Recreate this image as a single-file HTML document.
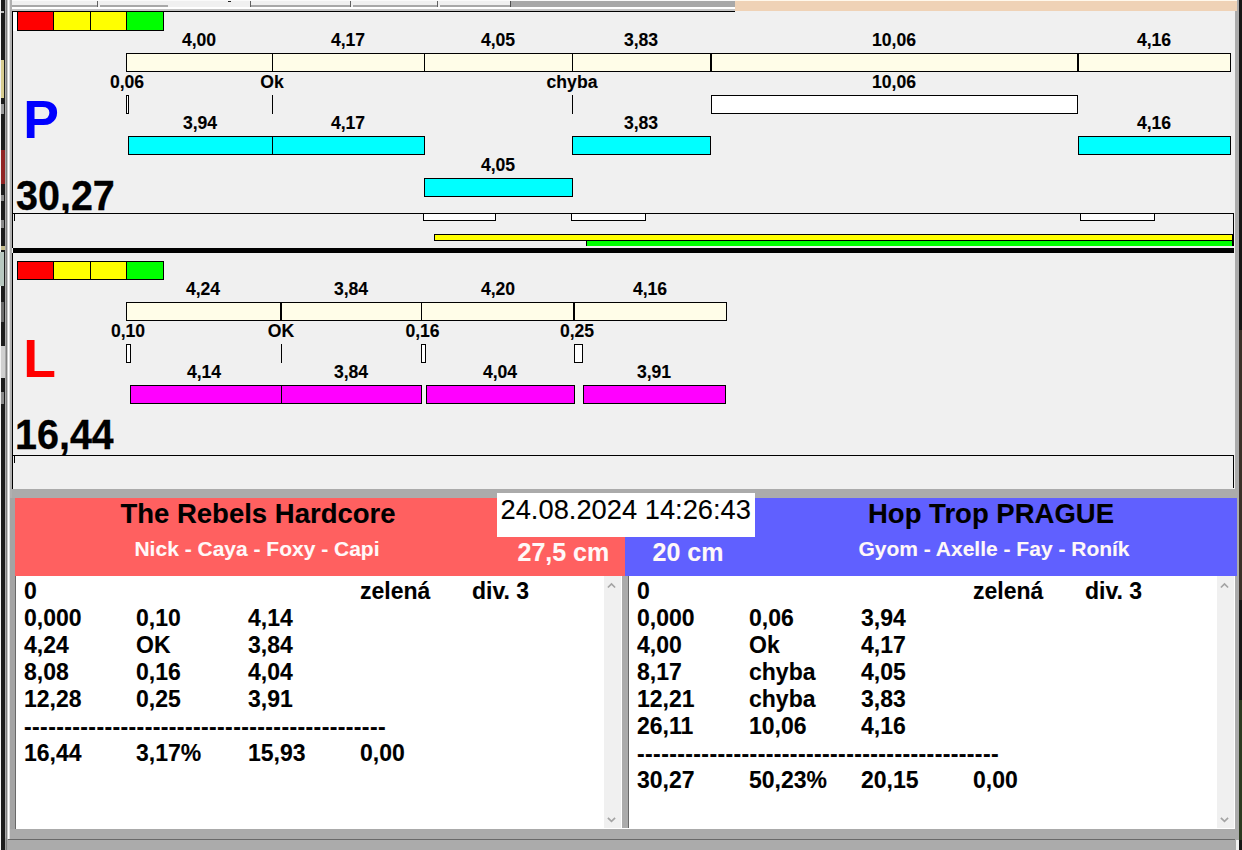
<!DOCTYPE html>
<html><head><meta charset="utf-8"><style>
html,body{margin:0;padding:0;width:1242px;height:850px;overflow:hidden;background:#f0f0f0}
body>div,body>svg{position:absolute;box-sizing:border-box}
</style></head><body>
<div style="left:0px;top:0px;width:1242px;height:850px;background:#f0f0f0;"></div>
<div style="left:0px;top:0px;width:1px;height:850px;background:#f4f4f4;"></div>
<div style="left:1px;top:0px;width:4px;height:850px;background:#1c1c1c;"></div>
<div style="left:5px;top:0px;width:1px;height:850px;background:#a8a8a8;"></div>
<div style="left:6px;top:0px;width:1px;height:850px;background:#808080;"></div>
<div style="left:7px;top:0px;width:1px;height:850px;background:#c8c8c8;"></div>
<div style="left:8px;top:0px;width:1px;height:850px;background:#ffffff;"></div>
<div style="left:9px;top:0px;width:1px;height:850px;background:#e0e0e0;"></div>
<div style="left:10px;top:0px;width:2px;height:850px;background:#b0b0b0;"></div>
<div style="left:1px;top:60px;width:3px;height:38px;background:#d8cc90;"></div>
<div style="left:1px;top:11px;width:3px;height:2px;background:#c0c0c0;"></div>
<div style="left:1px;top:104px;width:3px;height:10px;background:#9a9a9a;"></div>
<div style="left:1px;top:150px;width:4px;height:34px;background:#902424;"></div>
<div style="left:1px;top:195px;width:3px;height:6px;background:#8a8a8a;"></div>
<div style="left:1px;top:220px;width:3px;height:8px;background:#8a8a8a;"></div>
<div style="left:1px;top:246px;width:4px;height:4px;background:#c8c090;"></div>
<div style="left:0px;top:252px;width:4px;height:34px;background:#b8c8c0;"></div>
<div style="left:1px;top:302px;width:3px;height:20px;background:#6a6a6a;"></div>
<div style="left:1px;top:346px;width:4px;height:32px;background:#d0d0d0;"></div>
<div style="left:1px;top:392px;width:3px;height:12px;background:#8a8a8a;"></div>
<div style="left:5px;top:838px;width:1px;height:12px;background:#a0a0a0;"></div>
<div style="left:7px;top:839px;width:1px;height:11px;background:#a8a8a8;"></div>
<div style="left:1235px;top:0px;width:4px;height:850px;background:#ababab;"></div>
<div style="left:1239px;top:0px;width:3px;height:850px;background:#161616;"></div>
<div style="left:1239px;top:330px;width:3px;height:270px;background:#3a3028;"></div>
<div style="left:1239px;top:700px;width:3px;height:140px;background:#2c3a20;"></div>
<div style="left:1236px;top:840px;width:3px;height:10px;background:#f0f0f0;"></div>
<div style="left:12px;top:0px;width:723px;height:11px;background:#f0f0f0;"></div>
<div style="left:12px;top:0px;width:723px;height:1px;background:#fafafa;"></div>
<div style="left:12px;top:5px;width:85px;height:2px;background:#a8a8a8;"></div>
<div style="left:100px;top:5px;width:68px;height:2px;background:#a8a8a8;"></div>
<div style="left:251px;top:5px;width:99px;height:2px;background:#a8a8a8;"></div>
<div style="left:353px;top:5px;width:84px;height:2px;background:#a8a8a8;"></div>
<div style="left:440px;top:5px;width:70px;height:2px;background:#a8a8a8;"></div>
<div style="left:97px;top:1px;width:1px;height:7px;background:#606060;"></div>
<div style="left:250px;top:1px;width:1px;height:7px;background:#606060;"></div>
<div style="left:350px;top:1px;width:1px;height:7px;background:#606060;"></div>
<div style="left:437px;top:1px;width:1px;height:7px;background:#606060;"></div>
<div style="left:228px;top:1px;width:3px;height:1px;background:#202020;"></div>
<div style="left:510px;top:1px;width:225px;height:6px;background:#a8a8a8;"></div>
<div style="left:510px;top:1px;width:1px;height:6px;background:#505050;"></div>
<div style="left:12px;top:7px;width:723px;height:2px;background:#ffffff;"></div>
<div style="left:12px;top:9px;width:723px;height:2px;background:#c4c4c4;"></div>
<div style="left:735px;top:0px;width:502px;height:1px;background:#fff8ec;"></div>
<div style="left:735px;top:1px;width:502px;height:10px;background:#efd2b6;"></div>
<div style="left:12px;top:11px;width:723px;height:1px;background:#000;"></div>
<div style="left:12px;top:11px;width:1px;height:237px;background:#000;"></div>
<div style="left:13px;top:12px;width:4px;height:19px;background:#ffffff;"></div>
<div style="left:17px;top:11px;width:37px;height:20px;background:#ff0000;border:1px solid #000;"></div>
<div style="left:53px;top:11px;width:38px;height:20px;background:#ffff00;border:1px solid #000;"></div>
<div style="left:90px;top:11px;width:37px;height:20px;background:#ffff00;border:1px solid #000;"></div>
<div style="left:126px;top:11px;width:38px;height:20px;background:#00ff00;border:1px solid #000;"></div>
<div style="left:126px;top:53px;width:147px;height:19px;background:#fffde8;border:1px solid #000;"></div>
<div style="left:272px;top:53px;width:153px;height:19px;background:#fffde8;border:1px solid #000;"></div>
<div style="left:424px;top:53px;width:149px;height:19px;background:#fffde8;border:1px solid #000;"></div>
<div style="left:572px;top:53px;width:139px;height:19px;background:#fffde8;border:1px solid #000;"></div>
<div style="left:711px;top:53px;width:367px;height:19px;background:#fffde8;border:1px solid #000;"></div>
<div style="left:1078px;top:53px;width:153px;height:19px;background:#fffde8;border:1px solid #000;"></div>
<div style="left:126px;top:95px;width:3px;height:19px;background:#fff;border:1px solid #000;"></div>
<div style="left:272px;top:95px;width:1px;height:19px;background:#000;"></div>
<div style="left:572px;top:95px;width:1px;height:19px;background:#000;"></div>
<div style="left:711px;top:95px;width:367px;height:19px;background:#fff;border:1px solid #000;"></div>
<div style="left:128px;top:136px;width:145px;height:19px;background:#00ffff;border:1px solid #000;"></div>
<div style="left:272px;top:136px;width:153px;height:19px;background:#00ffff;border:1px solid #000;"></div>
<div style="left:572px;top:136px;width:139px;height:19px;background:#00ffff;border:1px solid #000;"></div>
<div style="left:1078px;top:136px;width:153px;height:19px;background:#00ffff;border:1px solid #000;"></div>
<div style="left:424px;top:178px;width:149px;height:19px;background:#00ffff;border:1px solid #000;"></div>
<div style="left:-101px;top:29.0px;width:600px;text-align:center;font:bold 17.6px 'Liberation Sans', sans-serif;line-height:22px;color:#000;white-space:pre;-webkit-text-stroke:0.1px #000;">4,00</div>
<div style="left:48px;top:29.0px;width:600px;text-align:center;font:bold 17.6px 'Liberation Sans', sans-serif;line-height:22px;color:#000;white-space:pre;-webkit-text-stroke:0.1px #000;">4,17</div>
<div style="left:198px;top:29.0px;width:600px;text-align:center;font:bold 17.6px 'Liberation Sans', sans-serif;line-height:22px;color:#000;white-space:pre;-webkit-text-stroke:0.1px #000;">4,05</div>
<div style="left:341px;top:29.0px;width:600px;text-align:center;font:bold 17.6px 'Liberation Sans', sans-serif;line-height:22px;color:#000;white-space:pre;-webkit-text-stroke:0.1px #000;">3,83</div>
<div style="left:594px;top:29.0px;width:600px;text-align:center;font:bold 17.6px 'Liberation Sans', sans-serif;line-height:22px;color:#000;white-space:pre;-webkit-text-stroke:0.1px #000;">10,06</div>
<div style="left:854px;top:29.0px;width:600px;text-align:center;font:bold 17.6px 'Liberation Sans', sans-serif;line-height:22px;color:#000;white-space:pre;-webkit-text-stroke:0.1px #000;">4,16</div>
<div style="left:-173px;top:71.0px;width:600px;text-align:center;font:bold 17.6px 'Liberation Sans', sans-serif;line-height:22px;color:#000;white-space:pre;-webkit-text-stroke:0.1px #000;">0,06</div>
<div style="left:-28px;top:71.0px;width:600px;text-align:center;font:bold 17.6px 'Liberation Sans', sans-serif;line-height:22px;color:#000;white-space:pre;-webkit-text-stroke:0.1px #000;">Ok</div>
<div style="left:272px;top:71.0px;width:600px;text-align:center;font:bold 17.6px 'Liberation Sans', sans-serif;line-height:22px;color:#000;white-space:pre;-webkit-text-stroke:0.1px #000;">chyba</div>
<div style="left:594px;top:71.0px;width:600px;text-align:center;font:bold 17.6px 'Liberation Sans', sans-serif;line-height:22px;color:#000;white-space:pre;-webkit-text-stroke:0.1px #000;">10,06</div>
<div style="left:-100px;top:112.0px;width:600px;text-align:center;font:bold 17.6px 'Liberation Sans', sans-serif;line-height:22px;color:#000;white-space:pre;-webkit-text-stroke:0.1px #000;">3,94</div>
<div style="left:48px;top:112.0px;width:600px;text-align:center;font:bold 17.6px 'Liberation Sans', sans-serif;line-height:22px;color:#000;white-space:pre;-webkit-text-stroke:0.1px #000;">4,17</div>
<div style="left:341px;top:112.0px;width:600px;text-align:center;font:bold 17.6px 'Liberation Sans', sans-serif;line-height:22px;color:#000;white-space:pre;-webkit-text-stroke:0.1px #000;">3,83</div>
<div style="left:854px;top:112.0px;width:600px;text-align:center;font:bold 17.6px 'Liberation Sans', sans-serif;line-height:22px;color:#000;white-space:pre;-webkit-text-stroke:0.1px #000;">4,16</div>
<div style="left:198px;top:154.0px;width:600px;text-align:center;font:bold 17.6px 'Liberation Sans', sans-serif;line-height:22px;color:#000;white-space:pre;-webkit-text-stroke:0.1px #000;">4,05</div>
<div style="left:23.2px;top:86.0px;font:bold 53.5px 'Liberation Sans', sans-serif;line-height:67px;color:#0000ff;white-space:pre;">P</div>
<div style="left:15.5px;top:169.5px;font:bold 42px 'Liberation Sans', sans-serif;line-height:52px;color:#000;white-space:pre;-webkit-text-stroke:0.3px #000;transform:scaleX(0.94);transform-origin:0 0;clip-path:inset(0 0 8.5px 0);">30,27</div>
<div style="left:12px;top:213px;width:1222px;height:1px;background:#000;"></div>
<div style="left:1233px;top:213px;width:1px;height:33px;background:#000;"></div>
<div style="left:14px;top:214px;width:1px;height:7px;background:#000;"></div>
<div style="left:423px;top:213px;width:73px;height:8px;background:#fff;border:1px solid #000;"></div>
<div style="left:571px;top:213px;width:75px;height:8px;background:#fff;border:1px solid #000;"></div>
<div style="left:1080px;top:213px;width:75px;height:8px;background:#fff;border:1px solid #000;"></div>
<div style="left:434px;top:234px;width:799px;height:7px;background:#ffff00;border:1px solid #000;"></div>
<div style="left:586px;top:241px;width:647px;height:5px;background:#00ff00;"></div>
<div style="left:586px;top:240px;width:1px;height:6px;background:#000;"></div>
<div style="left:1232px;top:240px;width:1px;height:6px;background:#000;"></div>
<div style="left:13px;top:248px;width:1221px;height:5px;background:#000;"></div>
<div style="left:12px;top:253px;width:1px;height:236px;background:#000;"></div>
<div style="left:17px;top:261px;width:37px;height:19px;background:#ff0000;border:1px solid #000;"></div>
<div style="left:53px;top:261px;width:38px;height:19px;background:#ffff00;border:1px solid #000;"></div>
<div style="left:90px;top:261px;width:37px;height:19px;background:#ffff00;border:1px solid #000;"></div>
<div style="left:126px;top:261px;width:38px;height:19px;background:#00ff00;border:1px solid #000;"></div>
<div style="left:126px;top:302px;width:155px;height:19px;background:#fffde8;border:1px solid #000;"></div>
<div style="left:281px;top:302px;width:141px;height:19px;background:#fffde8;border:1px solid #000;"></div>
<div style="left:421px;top:302px;width:153px;height:19px;background:#fffde8;border:1px solid #000;"></div>
<div style="left:574px;top:302px;width:153px;height:19px;background:#fffde8;border:1px solid #000;"></div>
<div style="left:126px;top:344px;width:5px;height:19px;background:#fff;border:1px solid #000;"></div>
<div style="left:281px;top:344px;width:1px;height:19px;background:#000;"></div>
<div style="left:421px;top:344px;width:5px;height:19px;background:#fff;border:1px solid #000;"></div>
<div style="left:574px;top:344px;width:9px;height:19px;background:#fff;border:1px solid #000;"></div>
<div style="left:130px;top:385px;width:152px;height:19px;background:#ff00ff;border:1px solid #000;"></div>
<div style="left:281px;top:385px;width:141px;height:19px;background:#ff00ff;border:1px solid #000;"></div>
<div style="left:426px;top:385px;width:149px;height:19px;background:#ff00ff;border:1px solid #000;"></div>
<div style="left:583px;top:385px;width:143px;height:19px;background:#ff00ff;border:1px solid #000;"></div>
<div style="left:-97px;top:278.0px;width:600px;text-align:center;font:bold 17.6px 'Liberation Sans', sans-serif;line-height:22px;color:#000;white-space:pre;-webkit-text-stroke:0.1px #000;">4,24</div>
<div style="left:51px;top:278.0px;width:600px;text-align:center;font:bold 17.6px 'Liberation Sans', sans-serif;line-height:22px;color:#000;white-space:pre;-webkit-text-stroke:0.1px #000;">3,84</div>
<div style="left:198px;top:278.0px;width:600px;text-align:center;font:bold 17.6px 'Liberation Sans', sans-serif;line-height:22px;color:#000;white-space:pre;-webkit-text-stroke:0.1px #000;">4,20</div>
<div style="left:350px;top:278.0px;width:600px;text-align:center;font:bold 17.6px 'Liberation Sans', sans-serif;line-height:22px;color:#000;white-space:pre;-webkit-text-stroke:0.1px #000;">4,16</div>
<div style="left:-172px;top:320.0px;width:600px;text-align:center;font:bold 17.6px 'Liberation Sans', sans-serif;line-height:22px;color:#000;white-space:pre;-webkit-text-stroke:0.1px #000;">0,10</div>
<div style="left:-19px;top:320.0px;width:600px;text-align:center;font:bold 17.6px 'Liberation Sans', sans-serif;line-height:22px;color:#000;white-space:pre;-webkit-text-stroke:0.1px #000;">OK</div>
<div style="left:122.5px;top:320.0px;width:600px;text-align:center;font:bold 17.6px 'Liberation Sans', sans-serif;line-height:22px;color:#000;white-space:pre;-webkit-text-stroke:0.1px #000;">0,16</div>
<div style="left:277px;top:320.0px;width:600px;text-align:center;font:bold 17.6px 'Liberation Sans', sans-serif;line-height:22px;color:#000;white-space:pre;-webkit-text-stroke:0.1px #000;">0,25</div>
<div style="left:-96px;top:361.0px;width:600px;text-align:center;font:bold 17.6px 'Liberation Sans', sans-serif;line-height:22px;color:#000;white-space:pre;-webkit-text-stroke:0.1px #000;">4,14</div>
<div style="left:51px;top:361.0px;width:600px;text-align:center;font:bold 17.6px 'Liberation Sans', sans-serif;line-height:22px;color:#000;white-space:pre;-webkit-text-stroke:0.1px #000;">3,84</div>
<div style="left:200px;top:361.0px;width:600px;text-align:center;font:bold 17.6px 'Liberation Sans', sans-serif;line-height:22px;color:#000;white-space:pre;-webkit-text-stroke:0.1px #000;">4,04</div>
<div style="left:354px;top:361.0px;width:600px;text-align:center;font:bold 17.6px 'Liberation Sans', sans-serif;line-height:22px;color:#000;white-space:pre;-webkit-text-stroke:0.1px #000;">3,91</div>
<div style="left:23.2px;top:325.0px;font:bold 53.5px 'Liberation Sans', sans-serif;line-height:67px;color:#ff0000;white-space:pre;">L</div>
<div style="left:15px;top:408.5px;font:bold 42px 'Liberation Sans', sans-serif;line-height:52px;color:#000;white-space:pre;-webkit-text-stroke:0.3px #000;transform:scaleX(0.94);transform-origin:0 0;clip-path:inset(0 0 5.5px 0);">16,44</div>
<div style="left:12px;top:455px;width:1222px;height:1px;background:#000;"></div>
<div style="left:1233px;top:455px;width:1px;height:33px;background:#000;"></div>
<div style="left:14px;top:456px;width:1px;height:7px;background:#000;"></div>
<div style="left:12px;top:489px;width:1223px;height:9px;background:#ababab;"></div>
<div style="left:10px;top:498px;width:5px;height:352px;background:#a4a4a4;"></div>
<div style="left:15px;top:498px;width:610px;height:78px;background:#ff6060;"></div>
<div style="left:625px;top:498px;width:612px;height:78px;background:#6060ff;"></div>
<div style="left:497px;top:493px;width:258px;height:44px;background:#ffffff;"></div>
<div style="left:500.5px;top:492.5px;font:normal 27.3px 'Liberation Sans', sans-serif;line-height:34px;color:#000;white-space:pre;-webkit-text-stroke:0.1px #000;">24.08.2024 14:26:43</div>
<div style="left:-42px;top:496.5px;width:600px;text-align:center;font:bold 27.5px 'Liberation Sans', sans-serif;line-height:34px;color:#000;white-space:pre;-webkit-text-stroke:0.1px #000;">The Rebels Hardcore</div>
<div style="left:-43px;top:535.5px;width:600px;text-align:center;font:bold 21px 'Liberation Sans', sans-serif;line-height:26px;color:#fff8f8;white-space:pre;-webkit-text-stroke:0.1px #fff8f8;">Nick - Caya - Foxy - Capi</div>
<div style="left:517.5px;top:536.5px;font:bold 25px 'Liberation Sans', sans-serif;line-height:31px;color:#fff8f8;white-space:pre;-webkit-text-stroke:0.1px #fff8f8;">27,5 cm</div>
<div style="left:691px;top:496.5px;width:600px;text-align:center;font:bold 27.5px 'Liberation Sans', sans-serif;line-height:34px;color:#000;white-space:pre;-webkit-text-stroke:0.1px #000;">Hop Trop PRAGUE</div>
<div style="left:694px;top:535.5px;width:600px;text-align:center;font:bold 21px 'Liberation Sans', sans-serif;line-height:26px;color:#fff8f8;white-space:pre;-webkit-text-stroke:0.1px #fff8f8;">Gyom - Axelle - Fay - Roník</div>
<div style="left:652.5px;top:536.5px;font:bold 25px 'Liberation Sans', sans-serif;line-height:31px;color:#fff8f8;white-space:pre;-webkit-text-stroke:0.1px #fff8f8;">20 cm</div>
<div style="left:15px;top:576px;width:1px;height:253px;background:#696969;"></div>
<div style="left:16px;top:576px;width:588px;height:252px;background:#ffffff;"></div>
<div style="left:604px;top:576px;width:17px;height:252px;background:#f0f0f0;"></div>
<div style="left:621px;top:576px;width:1px;height:253px;background:#ffffff;"></div>
<div style="left:622px;top:576px;width:6px;height:253px;background:#ababab;"></div>
<div style="left:628px;top:576px;width:1px;height:253px;background:#696969;"></div>
<div style="left:629px;top:576px;width:588px;height:252px;background:#ffffff;"></div>
<div style="left:1217px;top:576px;width:17px;height:252px;background:#f0f0f0;"></div>
<div style="left:1234px;top:576px;width:1px;height:253px;background:#ffffff;"></div>
<div style="left:16px;top:828px;width:1219px;height:1px;background:#ffffff;"></div>
<div style="left:10px;top:829px;width:1225px;height:10px;background:#ababab;"></div>
<div style="left:8px;top:839px;width:1227px;height:1px;background:#696969;"></div>
<div style="left:8px;top:840px;width:1227px;height:10px;background:#ababab;"></div>
<svg style="left:0;top:0" width="1242" height="850"><path d="M607.9,587.5 L611.5,583.9 L615.1,587.5" fill="none" stroke="#a4a4a4" stroke-width="1.7"/></svg>
<svg style="left:0;top:0" width="1242" height="850"><path d="M607.9,817.8 L611.5,821.4 L615.1,817.8" fill="none" stroke="#a4a4a4" stroke-width="1.7"/></svg>
<svg style="left:0;top:0" width="1242" height="850"><path d="M1220.9,587.5 L1224.5,583.9 L1228.1,587.5" fill="none" stroke="#a4a4a4" stroke-width="1.7"/></svg>
<svg style="left:0;top:0" width="1242" height="850"><path d="M1220.9,817.8 L1224.5,821.4 L1228.1,817.8" fill="none" stroke="#a4a4a4" stroke-width="1.7"/></svg>
<div style="left:24px;top:576.5px;font:bold 23px 'Liberation Sans', sans-serif;line-height:29px;color:#000;white-space:pre;-webkit-text-stroke:0.1px #000;">0</div>
<div style="left:360px;top:576.5px;font:bold 23px 'Liberation Sans', sans-serif;line-height:29px;color:#000;white-space:pre;-webkit-text-stroke:0.1px #000;">zelená</div>
<div style="left:472px;top:576.5px;font:bold 23px 'Liberation Sans', sans-serif;line-height:29px;color:#000;white-space:pre;-webkit-text-stroke:0.1px #000;">div. 3</div>
<div style="left:24px;top:603.5px;font:bold 23px 'Liberation Sans', sans-serif;line-height:29px;color:#000;white-space:pre;-webkit-text-stroke:0.1px #000;">0,000</div>
<div style="left:136px;top:603.5px;font:bold 23px 'Liberation Sans', sans-serif;line-height:29px;color:#000;white-space:pre;-webkit-text-stroke:0.1px #000;">0,10</div>
<div style="left:248px;top:603.5px;font:bold 23px 'Liberation Sans', sans-serif;line-height:29px;color:#000;white-space:pre;-webkit-text-stroke:0.1px #000;">4,14</div>
<div style="left:24px;top:630.5px;font:bold 23px 'Liberation Sans', sans-serif;line-height:29px;color:#000;white-space:pre;-webkit-text-stroke:0.1px #000;">4,24</div>
<div style="left:136px;top:630.5px;font:bold 23px 'Liberation Sans', sans-serif;line-height:29px;color:#000;white-space:pre;-webkit-text-stroke:0.1px #000;">OK</div>
<div style="left:248px;top:630.5px;font:bold 23px 'Liberation Sans', sans-serif;line-height:29px;color:#000;white-space:pre;-webkit-text-stroke:0.1px #000;">3,84</div>
<div style="left:24px;top:657.5px;font:bold 23px 'Liberation Sans', sans-serif;line-height:29px;color:#000;white-space:pre;-webkit-text-stroke:0.1px #000;">8,08</div>
<div style="left:136px;top:657.5px;font:bold 23px 'Liberation Sans', sans-serif;line-height:29px;color:#000;white-space:pre;-webkit-text-stroke:0.1px #000;">0,16</div>
<div style="left:248px;top:657.5px;font:bold 23px 'Liberation Sans', sans-serif;line-height:29px;color:#000;white-space:pre;-webkit-text-stroke:0.1px #000;">4,04</div>
<div style="left:24px;top:684.5px;font:bold 23px 'Liberation Sans', sans-serif;line-height:29px;color:#000;white-space:pre;-webkit-text-stroke:0.1px #000;">12,28</div>
<div style="left:136px;top:684.5px;font:bold 23px 'Liberation Sans', sans-serif;line-height:29px;color:#000;white-space:pre;-webkit-text-stroke:0.1px #000;">0,25</div>
<div style="left:248px;top:684.5px;font:bold 23px 'Liberation Sans', sans-serif;line-height:29px;color:#000;white-space:pre;-webkit-text-stroke:0.1px #000;">3,91</div>
<div style="left:24px;top:712.5px;font:bold 23px 'Liberation Sans', sans-serif;line-height:29px;color:#000;white-space:pre;-webkit-text-stroke:0.1px #000;letter-spacing:0.385px;">---------------------------------------------</div>
<div style="left:24px;top:738.5px;font:bold 23px 'Liberation Sans', sans-serif;line-height:29px;color:#000;white-space:pre;-webkit-text-stroke:0.1px #000;">16,44</div>
<div style="left:136px;top:738.5px;font:bold 23px 'Liberation Sans', sans-serif;line-height:29px;color:#000;white-space:pre;-webkit-text-stroke:0.1px #000;">3,17%</div>
<div style="left:248px;top:738.5px;font:bold 23px 'Liberation Sans', sans-serif;line-height:29px;color:#000;white-space:pre;-webkit-text-stroke:0.1px #000;">15,93</div>
<div style="left:360px;top:738.5px;font:bold 23px 'Liberation Sans', sans-serif;line-height:29px;color:#000;white-space:pre;-webkit-text-stroke:0.1px #000;">0,00</div>
<div style="left:637px;top:576.5px;font:bold 23px 'Liberation Sans', sans-serif;line-height:29px;color:#000;white-space:pre;-webkit-text-stroke:0.1px #000;">0</div>
<div style="left:973px;top:576.5px;font:bold 23px 'Liberation Sans', sans-serif;line-height:29px;color:#000;white-space:pre;-webkit-text-stroke:0.1px #000;">zelená</div>
<div style="left:1085px;top:576.5px;font:bold 23px 'Liberation Sans', sans-serif;line-height:29px;color:#000;white-space:pre;-webkit-text-stroke:0.1px #000;">div. 3</div>
<div style="left:637px;top:603.5px;font:bold 23px 'Liberation Sans', sans-serif;line-height:29px;color:#000;white-space:pre;-webkit-text-stroke:0.1px #000;">0,000</div>
<div style="left:749px;top:603.5px;font:bold 23px 'Liberation Sans', sans-serif;line-height:29px;color:#000;white-space:pre;-webkit-text-stroke:0.1px #000;">0,06</div>
<div style="left:861px;top:603.5px;font:bold 23px 'Liberation Sans', sans-serif;line-height:29px;color:#000;white-space:pre;-webkit-text-stroke:0.1px #000;">3,94</div>
<div style="left:637px;top:630.5px;font:bold 23px 'Liberation Sans', sans-serif;line-height:29px;color:#000;white-space:pre;-webkit-text-stroke:0.1px #000;">4,00</div>
<div style="left:749px;top:630.5px;font:bold 23px 'Liberation Sans', sans-serif;line-height:29px;color:#000;white-space:pre;-webkit-text-stroke:0.1px #000;">Ok</div>
<div style="left:861px;top:630.5px;font:bold 23px 'Liberation Sans', sans-serif;line-height:29px;color:#000;white-space:pre;-webkit-text-stroke:0.1px #000;">4,17</div>
<div style="left:637px;top:657.5px;font:bold 23px 'Liberation Sans', sans-serif;line-height:29px;color:#000;white-space:pre;-webkit-text-stroke:0.1px #000;">8,17</div>
<div style="left:749px;top:657.5px;font:bold 23px 'Liberation Sans', sans-serif;line-height:29px;color:#000;white-space:pre;-webkit-text-stroke:0.1px #000;">chyba</div>
<div style="left:861px;top:657.5px;font:bold 23px 'Liberation Sans', sans-serif;line-height:29px;color:#000;white-space:pre;-webkit-text-stroke:0.1px #000;">4,05</div>
<div style="left:637px;top:684.5px;font:bold 23px 'Liberation Sans', sans-serif;line-height:29px;color:#000;white-space:pre;-webkit-text-stroke:0.1px #000;">12,21</div>
<div style="left:749px;top:684.5px;font:bold 23px 'Liberation Sans', sans-serif;line-height:29px;color:#000;white-space:pre;-webkit-text-stroke:0.1px #000;">chyba</div>
<div style="left:861px;top:684.5px;font:bold 23px 'Liberation Sans', sans-serif;line-height:29px;color:#000;white-space:pre;-webkit-text-stroke:0.1px #000;">3,83</div>
<div style="left:637px;top:711.5px;font:bold 23px 'Liberation Sans', sans-serif;line-height:29px;color:#000;white-space:pre;-webkit-text-stroke:0.1px #000;">26,11</div>
<div style="left:749px;top:711.5px;font:bold 23px 'Liberation Sans', sans-serif;line-height:29px;color:#000;white-space:pre;-webkit-text-stroke:0.1px #000;">10,06</div>
<div style="left:861px;top:711.5px;font:bold 23px 'Liberation Sans', sans-serif;line-height:29px;color:#000;white-space:pre;-webkit-text-stroke:0.1px #000;">4,16</div>
<div style="left:637px;top:739.5px;font:bold 23px 'Liberation Sans', sans-serif;line-height:29px;color:#000;white-space:pre;-webkit-text-stroke:0.1px #000;letter-spacing:0.385px;">---------------------------------------------</div>
<div style="left:637px;top:765.5px;font:bold 23px 'Liberation Sans', sans-serif;line-height:29px;color:#000;white-space:pre;-webkit-text-stroke:0.1px #000;">30,27</div>
<div style="left:749px;top:765.5px;font:bold 23px 'Liberation Sans', sans-serif;line-height:29px;color:#000;white-space:pre;-webkit-text-stroke:0.1px #000;">50,23%</div>
<div style="left:861px;top:765.5px;font:bold 23px 'Liberation Sans', sans-serif;line-height:29px;color:#000;white-space:pre;-webkit-text-stroke:0.1px #000;">20,15</div>
<div style="left:973px;top:765.5px;font:bold 23px 'Liberation Sans', sans-serif;line-height:29px;color:#000;white-space:pre;-webkit-text-stroke:0.1px #000;">0,00</div>
</body></html>
